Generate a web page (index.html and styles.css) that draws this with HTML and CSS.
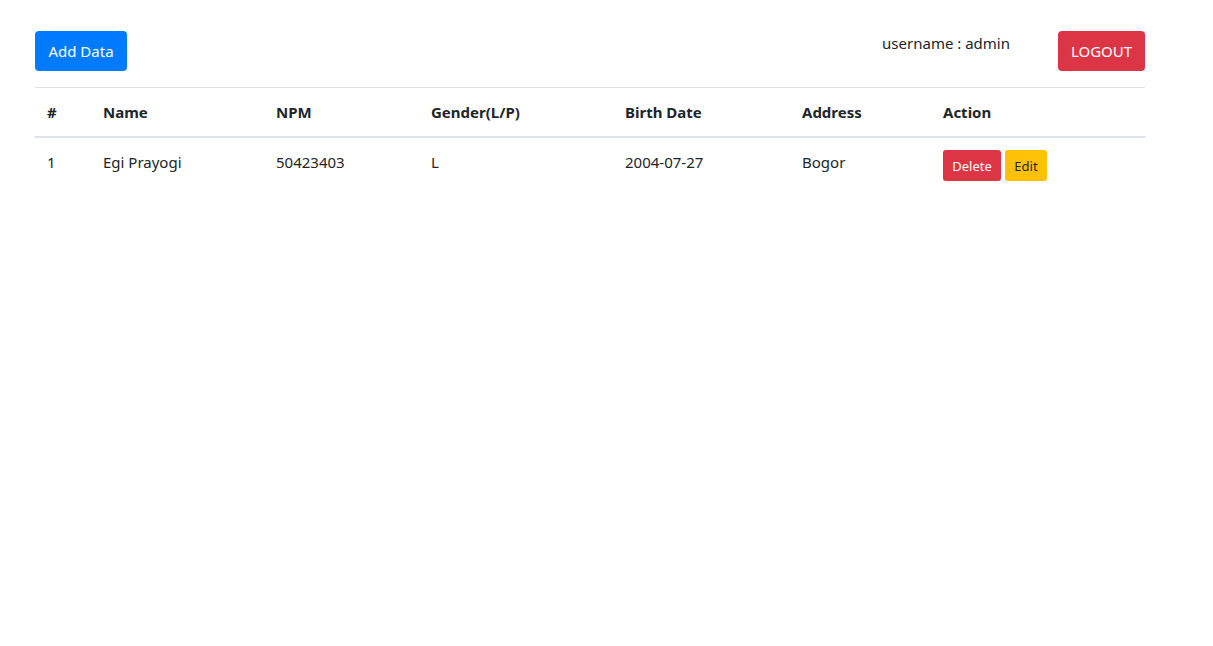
FILE: index.html
```html
<!DOCTYPE html>
<html>
<head>
<meta charset="utf-8">
<link rel="stylesheet" href="styles.css">
</head>
<body>
<div class="container">
  <div class="topbar">
    <button class="btn btn-primary btn-add">Add Data</button>
    <div class="user">
      <span class="username">username : admin</span>
      <button class="btn btn-danger btn-logout">LOGOUT</button>
    </div>
  </div>
  <table class="table">
    <colgroup>
      <col class="c1"><col class="c2"><col class="c3"><col class="c4"><col class="c5"><col class="c6"><col class="c7">
    </colgroup>
    <thead>
      <tr><th>#</th><th>Name</th><th>NPM</th><th>Gender(L/P)</th><th>Birth Date</th><th>Address</th><th>Action</th></tr>
    </thead>
    <tbody>
      <tr>
        <td>1</td><td>Egi Prayogi</td><td>50423403</td><td>L</td><td>2004-07-27</td><td>Bogor</td>
        <td class="actions"><button class="btn btn-sm btn-danger btn-del">Delete</button><button class="btn btn-sm btn-warning btn-edit">Edit</button></td>
      </tr>
    </tbody>
  </table>
</div>
</body>
</html>
```
FILE: styles.css
```css
* { box-sizing: border-box; }
html, body { margin: 0; padding: 0; background: #fff; }
body {
  font-family: "Noto Sans", "Open Sans", sans-serif;
  font-size: 15px;
  line-height: 24px;
  color: #212529;
}
.container {
  width: 1110px;
  margin-left: 35px;
  padding-top: 31px;
}
.topbar {
  display: flex;
  justify-content: space-between;
  align-items: flex-start;
  margin-bottom: 16px;
}
.user { display: flex; align-items: flex-start; }
.username { margin-right: 48px; }
.btn {
  font-family: inherit;
  border: 1px solid transparent;
  border-radius: 4px;
  cursor: pointer;
  display: inline-flex;
  align-items: center;
  justify-content: center;
  padding: 0;
}
.btn-primary { background: #007bff; color: #fff; }
.btn-danger { background: #dc3545; color: #fff; }
.btn-warning { background: #ffc107; color: #212529; }
.btn-add { width: 92px; height: 40px; font-size: 15px; }
.btn-logout { width: 87px; height: 40px; font-size: 15px; }
.btn-sm { height: 31px; font-size: 13px; border-radius: 3px; }
.btn-del { width: 58px; margin-right: 4px; }
.btn-edit { width: 42px; }
.table {
  width: 1110px;
  border-collapse: collapse;
  table-layout: fixed;
}
.c1 { width: 56px; }
.c2 { width: 173px; }
.c3 { width: 155px; }
.c4 { width: 194px; }
.c5 { width: 177px; }
.c6 { width: 141px; }
.c7 { width: 214px; }
.table th, .table td {
  padding: 12px;
  text-align: left;
  vertical-align: top;
  border-top: 1px solid #dee2e6;
}
.table th { font-weight: 700; border-bottom: 2px solid #dee2e6; }
.table tbody td { border-top: none; }
.table td.actions { padding-top: 12px; padding-bottom: 5px; }
```
